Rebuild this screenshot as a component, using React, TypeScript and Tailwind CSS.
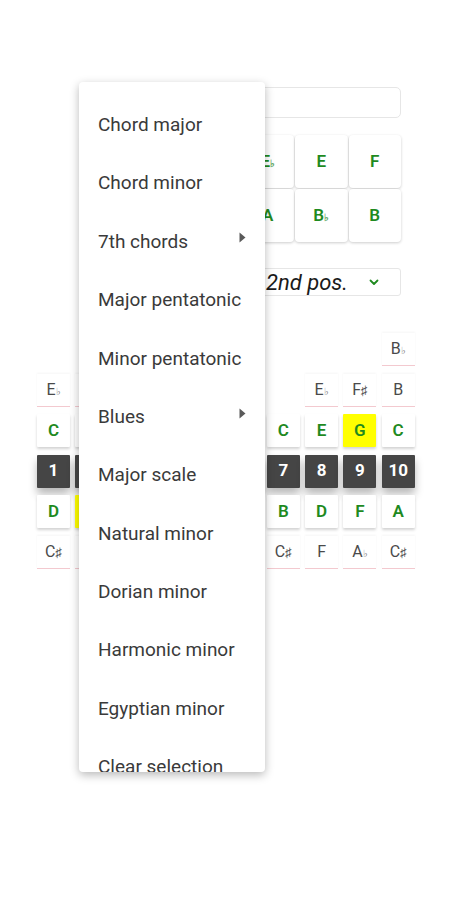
import React from 'react';

type Cell = { t?: string; acc?: string; kind?: 'green' | 'gray' | 'num'; hl?: boolean };

const pickerNotes: { t: string; acc?: string }[] = [
  { t: 'C' }, { t: 'C', acc: '♯' }, { t: 'D' }, { t: 'E', acc: '♭' }, { t: 'E' }, { t: 'F' },
  { t: 'F', acc: '♯' }, { t: 'G' }, { t: 'A', acc: '♭' }, { t: 'A' }, { t: 'B', acc: '♭' }, { t: 'B' },
];

// columns of the fretboard, rows from top to bottom
const columns: Cell[][] = [
  [{}, { t: 'E', acc: '♭', kind: 'gray' }, { t: 'C', kind: 'green' }, { t: '1', kind: 'num' }, { t: 'D', kind: 'green' }, { t: 'C', acc: '♯', kind: 'gray' }],
  [{}, { t: 'F', kind: 'gray' }, { t: 'D', kind: 'green' }, { t: '2', kind: 'num' }, { t: 'E', kind: 'green', hl: true }, { t: 'D', kind: 'gray' }],
  [{}, {}, { t: 'E', kind: 'green' }, { t: '3', kind: 'num' }, { t: 'F', kind: 'green' }, { t: 'E', acc: '♭', kind: 'gray' }],
  [{}, { t: 'G', kind: 'gray' }, { t: 'F', kind: 'green' }, { t: '4', kind: 'num' }, { t: 'G', kind: 'green' }, { t: 'E', kind: 'gray' }],
  [{}, {}, { t: 'G', kind: 'green' }, { t: '5', kind: 'num' }, { t: 'A', kind: 'green' }, { t: 'F', kind: 'gray' }],
  [{}, { t: 'A', kind: 'gray' }, { t: 'A', kind: 'green' }, { t: '6', kind: 'num' }, { t: 'A', kind: 'green' }, { t: 'B', kind: 'gray' }],
  [{}, {}, { t: 'C', kind: 'green' }, { t: '7', kind: 'num' }, { t: 'B', kind: 'green' }, { t: 'C', acc: '♯', kind: 'gray' }],
  [{}, { t: 'E', acc: '♭', kind: 'gray' }, { t: 'E', kind: 'green' }, { t: '8', kind: 'num' }, { t: 'D', kind: 'green' }, { t: 'F', kind: 'gray' }],
  [{}, { t: 'F', acc: '♯', kind: 'gray' }, { t: 'G', kind: 'green', hl: true }, { t: '9', kind: 'num' }, { t: 'F', kind: 'green' }, { t: 'A', acc: '♭', kind: 'gray' }],
  [{ t: 'B', acc: '♭', kind: 'gray' }, { t: 'B', kind: 'gray' }, { t: 'C', kind: 'green' }, { t: '10', kind: 'num' }, { t: 'A', kind: 'green' }, { t: 'C', acc: '♯', kind: 'gray' }],
];

const menuItems: { label: string; sub?: boolean }[] = [
  { label: 'Chord major' },
  { label: 'Chord minor' },
  { label: '7th chords', sub: true },
  { label: 'Major pentatonic' },
  { label: 'Minor pentatonic' },
  { label: 'Blues', sub: true },
  { label: 'Major scale' },
  { label: 'Natural minor' },
  { label: 'Dorian minor' },
  { label: 'Harmonic minor' },
  { label: 'Egyptian minor' },
  { label: 'Clear selection' },
];

function Note({ t, acc }: { t: string; acc?: string }) {
  return (
    <span className="inline-flex items-baseline">
      {t}
      {acc && <span className={acc === '♭' ? 'text-[10px] opacity-70' : 'text-[13px]'}>{acc}</span>}
    </span>
  );
}

function FretCell({ cell }: { cell: Cell }) {
  if (!cell.t) return <div className="h-[33px]" />;
  if (cell.kind === 'num') {
    return (
      <div className="h-[33px] flex items-center justify-center bg-[#454545] text-white font-bold text-[17px] rounded-[1px] shadow-[0_6px_9px_rgba(0,0,0,0.28)]">
        {cell.t}
      </div>
    );
  }
  if (cell.kind === 'green') {
    return (
      <div
        className={
          'h-[33px] flex items-center justify-center text-[#1f8a1f] font-semibold text-[17px] rounded-[1px] shadow-[0_2px_3px_rgba(0,0,0,0.18)] ' +
          (cell.hl ? 'bg-[#ffff00]' : 'bg-white')
        }
      >
        <Note t={cell.t} acc={cell.acc} />
      </div>
    );
  }
  return (
    <div className="h-[33px] flex items-center justify-center text-[#4a4a4a] text-[16px] bg-white border-b border-[#f3c9cf] shadow-[0_-1px_2px_rgba(0,0,0,0.04)]">
      <Note t={cell.t} acc={cell.acc} />
    </div>
  );
}

export default function App() {
  return (
    <div className="relative w-[450px] h-[900px] bg-white overflow-hidden" style={{ fontFamily: 'Roboto, "Noto Sans", sans-serif' }}>
      <div className="pt-[87px]">
        {/* search / name box */}
        <div className="ml-[81px] w-[320px] h-[31px] border border-[#e6e6e6] rounded-[5px]" />

        {/* note picker */}
        <div className="ml-[81px] mt-[17px] w-[320px] grid grid-cols-6 gap-[1px]">
          {pickerNotes.map((n, i) => (
            <div
              key={i}
              className="h-[53px] flex items-center justify-center bg-white rounded-[4px] shadow-[0_1px_3px_rgba(0,0,0,0.2)] text-[#1f8a1f] font-semibold text-[17px]"
            >
              <Note t={n.t} acc={n.acc} />
            </div>
          ))}
        </div>

        {/* position select */}
        <div className="ml-[81px] mt-[26px] w-[320px] h-[28px] border border-[#e6e6e6] rounded-[3px] flex items-center justify-end pr-[20px]">
          <span className="italic text-[22px] text-[#1a1a1a]">2nd pos.</span>
          <svg className="ml-[20px] w-[12px] h-[12px]" viewBox="0 0 12 12" fill="none" stroke="#1f8a1f" strokeWidth="1.8" strokeLinecap="round" strokeLinejoin="round">
            <path d="M2.5 4.5L6 8L9.5 4.5" />
          </svg>
        </div>

        {/* fretboard */}
        <div className="ml-[37px] mt-[37px] grid grid-cols-[repeat(10,33px)] gap-x-[5.3px]">
          {columns.map((col, ci) => (
            <div key={ci} className="flex flex-col gap-[7.5px]">
              {col.map((cell, ri) => (
                <FretCell key={ri} cell={cell} />
              ))}
            </div>
          ))}
        </div>
      </div>

      {/* popup menu */}
      <div className="absolute left-[79px] top-[82px] w-[186px] h-[690px] bg-white rounded-[4px] shadow-[0_3px_10px_rgba(0,0,0,0.28)] overflow-hidden pt-[14px]">
        {menuItems.map((m) => (
          <div key={m.label} className="h-[58.4px] flex items-center justify-between pl-[19px] pr-[19px] text-[19px] text-[#3a3a3a]">
            <span className="whitespace-nowrap">{m.label}</span>
            {m.sub && (
              <svg className="w-[7px] h-[11px] -mt-[8px]" viewBox="0 0 7 11">
                <path d="M0.5 0.5L6.5 5.5L0.5 10.5Z" fill="#5a5a5a" />
              </svg>
            )}
          </div>
        ))}
      </div>
    </div>
  );
}
